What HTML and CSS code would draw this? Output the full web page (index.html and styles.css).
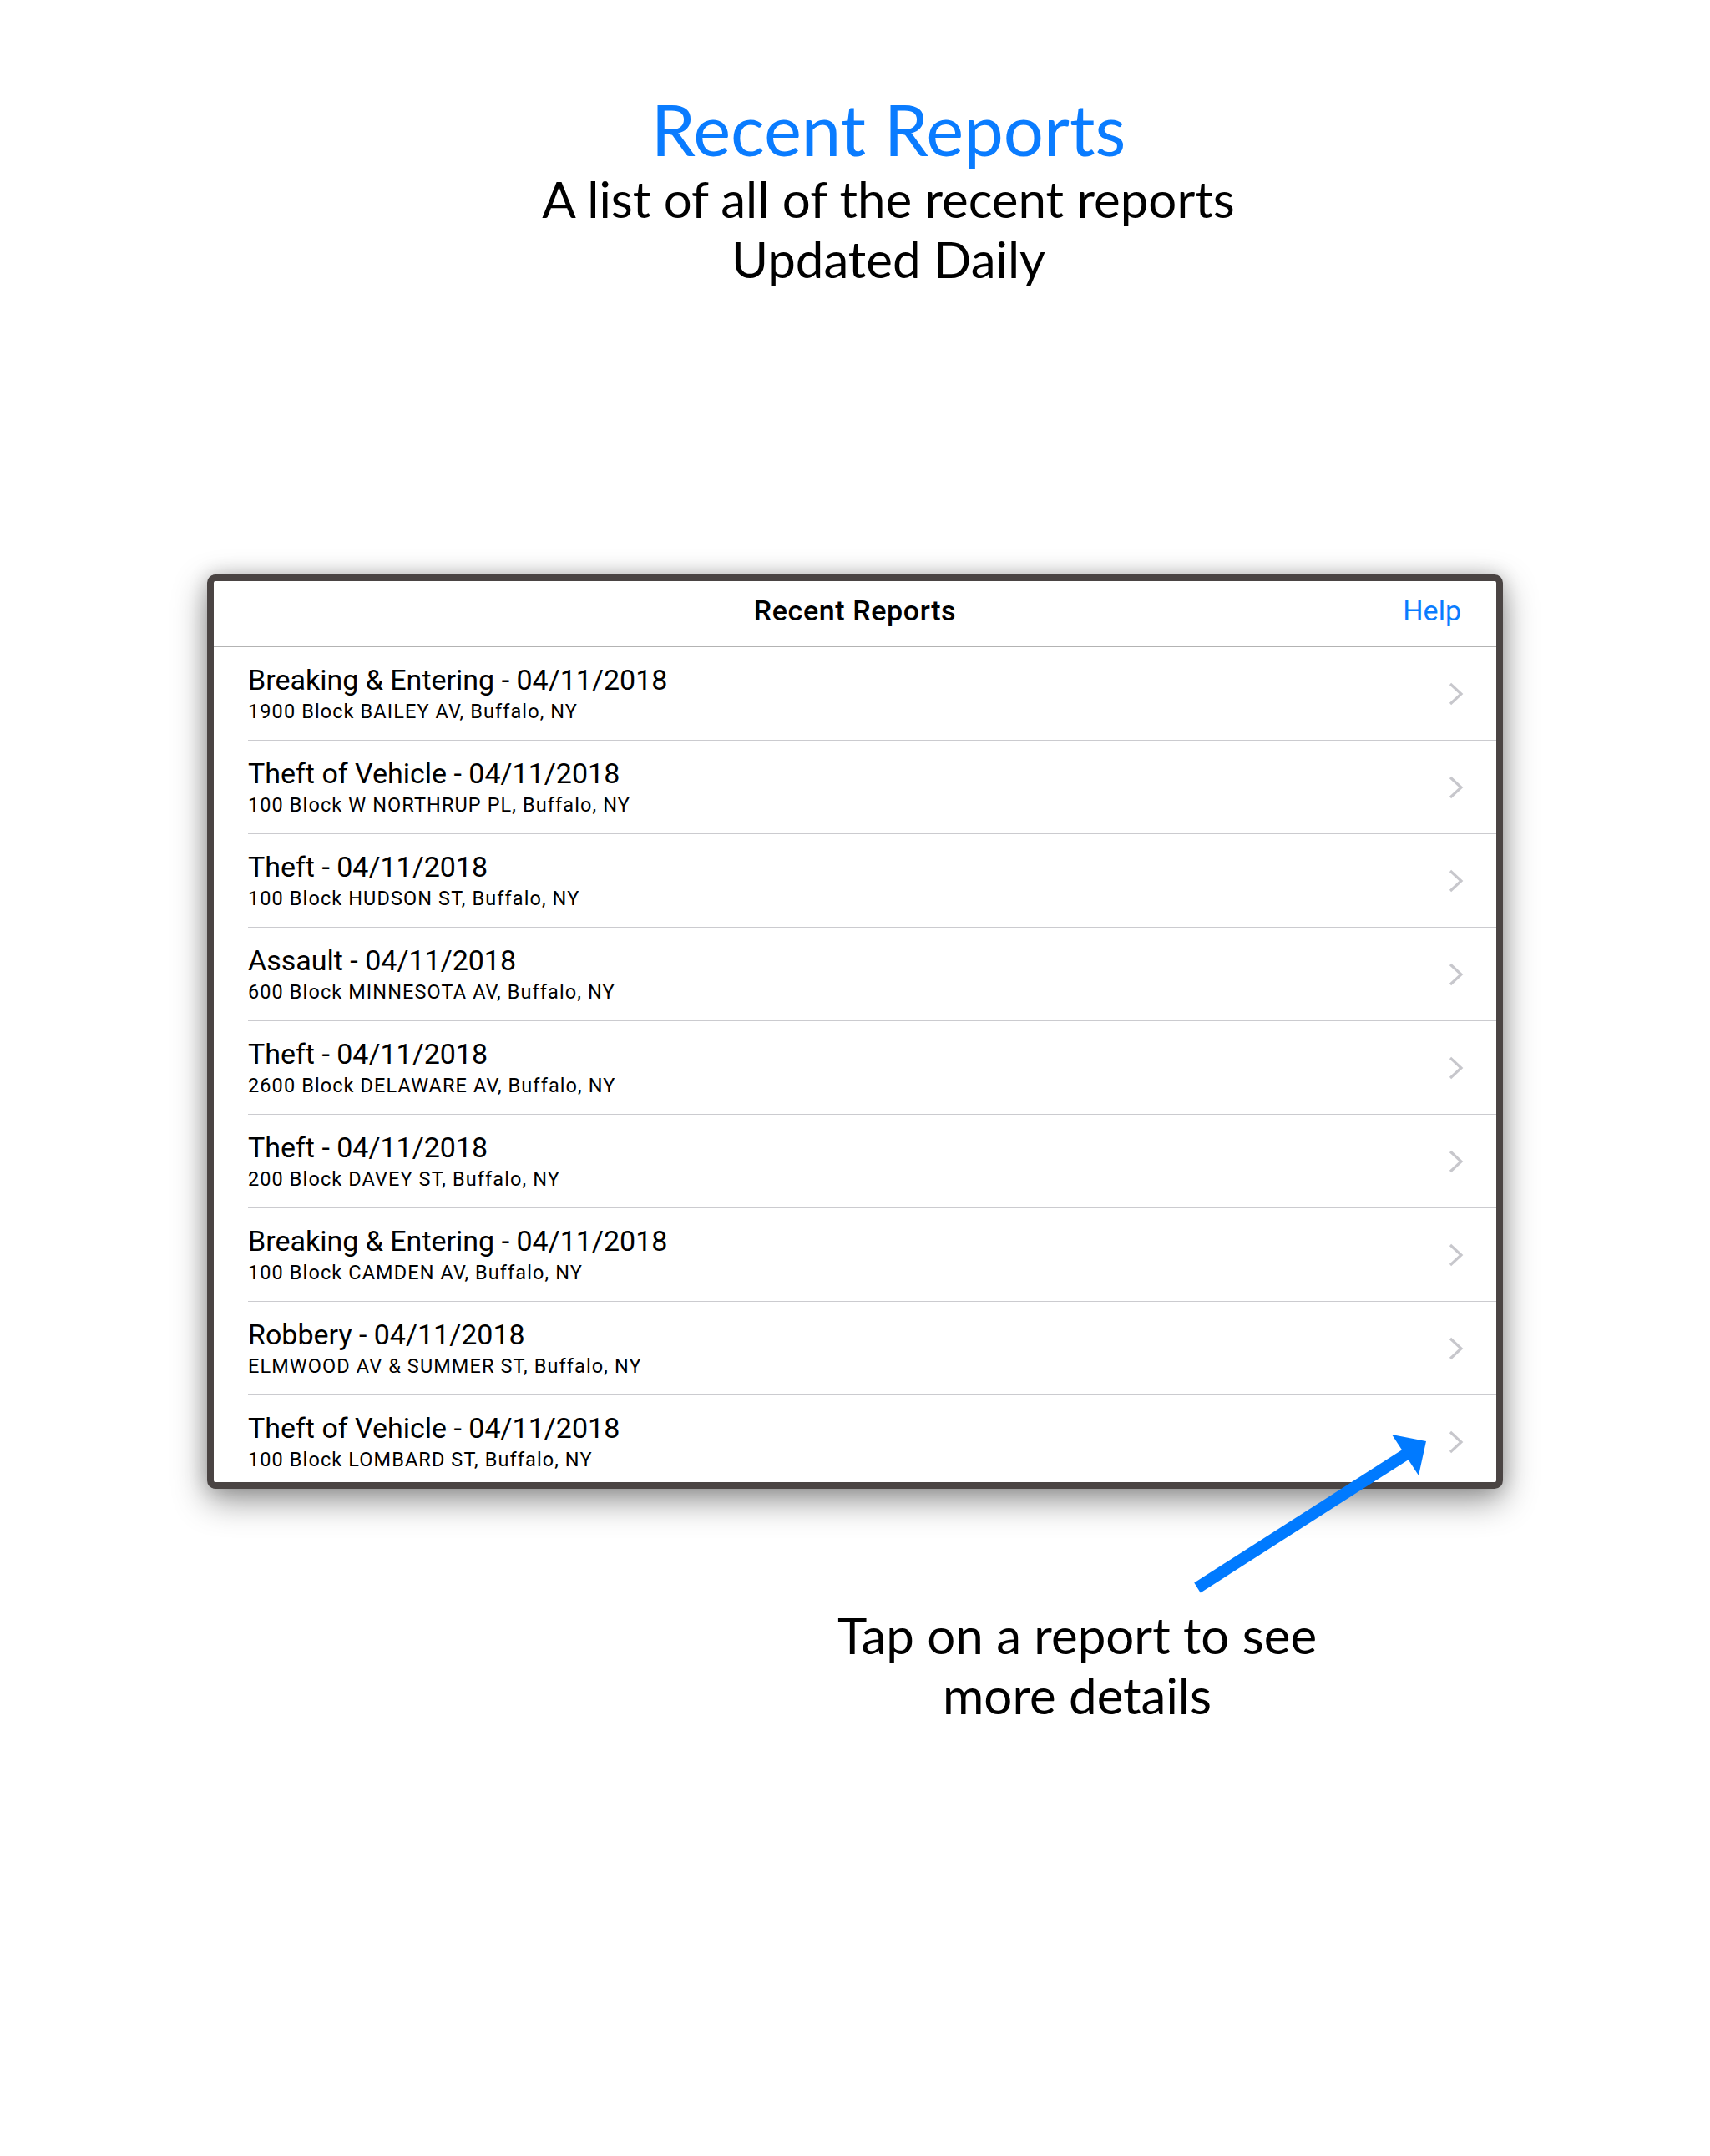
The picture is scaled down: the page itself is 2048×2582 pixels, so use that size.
FILE: index.html
```html
<!DOCTYPE html>
<html lang="en">
<head>
<meta charset="utf-8">
<title>Recent Reports</title>
<link rel="stylesheet" href="styles.css">
</head>
<body>
<div class="page">
  <header class="intro">
    <h1 class="intro-title">Recent Reports</h1>
    <p class="intro-sub">A list of all of the recent reports<br>Updated Daily</p>
  </header>

  <div class="device">
    <div class="navbar">
      <span class="nav-spacer"></span>
      <span class="nav-title">Recent Reports</span>
      <span class="nav-help">Help</span>
    </div>
    <ul class="list">
      <li class="row"><div class="row-text"><span class="row-title">Breaking &amp; Entering - 04/11/2018</span><span class="row-sub">1900 Block BAILEY AV, Buffalo, NY</span></div><svg class="chev" viewBox="0 0 18 28"><path d="M2 2 L15 14 L2 26"/></svg></li>
      <li class="row"><div class="row-text"><span class="row-title">Theft of Vehicle - 04/11/2018</span><span class="row-sub">100 Block W NORTHRUP PL, Buffalo, NY</span></div><svg class="chev" viewBox="0 0 18 28"><path d="M2 2 L15 14 L2 26"/></svg></li>
      <li class="row"><div class="row-text"><span class="row-title">Theft - 04/11/2018</span><span class="row-sub">100 Block HUDSON ST, Buffalo, NY</span></div><svg class="chev" viewBox="0 0 18 28"><path d="M2 2 L15 14 L2 26"/></svg></li>
      <li class="row"><div class="row-text"><span class="row-title">Assault - 04/11/2018</span><span class="row-sub">600 Block MINNESOTA AV, Buffalo, NY</span></div><svg class="chev" viewBox="0 0 18 28"><path d="M2 2 L15 14 L2 26"/></svg></li>
      <li class="row"><div class="row-text"><span class="row-title">Theft - 04/11/2018</span><span class="row-sub">2600 Block DELAWARE AV, Buffalo, NY</span></div><svg class="chev" viewBox="0 0 18 28"><path d="M2 2 L15 14 L2 26"/></svg></li>
      <li class="row"><div class="row-text"><span class="row-title">Theft - 04/11/2018</span><span class="row-sub">200 Block DAVEY ST, Buffalo, NY</span></div><svg class="chev" viewBox="0 0 18 28"><path d="M2 2 L15 14 L2 26"/></svg></li>
      <li class="row"><div class="row-text"><span class="row-title">Breaking &amp; Entering - 04/11/2018</span><span class="row-sub">100 Block CAMDEN AV, Buffalo, NY</span></div><svg class="chev" viewBox="0 0 18 28"><path d="M2 2 L15 14 L2 26"/></svg></li>
      <li class="row"><div class="row-text"><span class="row-title">Robbery - 04/11/2018</span><span class="row-sub">ELMWOOD AV &amp; SUMMER ST, Buffalo, NY</span></div><svg class="chev" viewBox="0 0 18 28"><path d="M2 2 L15 14 L2 26"/></svg></li>
      <li class="row"><div class="row-text"><span class="row-title">Theft of Vehicle - 04/11/2018</span><span class="row-sub">100 Block LOMBARD ST, Buffalo, NY</span></div><svg class="chev" viewBox="0 0 18 28"><path d="M2 2 L15 14 L2 26"/></svg></li>
    </ul>
  </div>

  <p class="caption">Tap on a report to see<br>more details</p>

  <svg class="arrow" viewBox="0 0 340 240" width="340" height="240">
    <line x1="34" y1="201.5" x2="288" y2="39" class="arrow-shaft"/>
    <polygon points="308,26 267,18 299,67" class="arrow-head"/>
  </svg>
</div>
</body>
</html>
```

FILE: styles.css
```css
html, body {
  margin: 0;
  padding: 0;
  background: #ffffff;
}

.page {
  position: relative;
  width: 2048px;
  height: 2582px;
  font-family: Lato, "Open Sans", sans-serif;
  color: #000000;
}

.intro {
  padding-top: 106px;
  padding-left: 80px;
  text-align: center;
}

.intro-title {
  margin: 0;
  font-weight: 400;
  font-size: 85px;
  line-height: 96px;
  color: #0a7cff;
}

.intro-sub {
  margin: 0;
  font-size: 60px;
  line-height: 72px;
  color: #000000;
}

.device {
  box-sizing: content-box;
  width: 1536px;
  height: 1079px;
  margin: 342px auto 0;
  border: 8px solid #4a4443;
  border-radius: 10px;
  background: #ffffff;
  overflow: hidden;
  box-shadow: 0 14px 40px rgba(0, 0, 0, 0.42), 0 0 22px rgba(0, 0, 0, 0.18);
  font-family: Roboto, "Liberation Sans", sans-serif;
}

.navbar {
  display: grid;
  grid-template-columns: 1fr auto 1fr;
  align-items: center;
  box-sizing: border-box;
  height: 79px;
  padding-bottom: 9px;
  border-bottom: 1px solid #b3b3b3;
  padding-right: 42px;
}

.nav-title {
  font-size: 34px;
  font-weight: 500;
  letter-spacing: 0.6px;
  color: #000000;
  padding-left: 42px;
}

.nav-help {
  justify-self: end;
  font-size: 34px;
  color: #0a7cff;
}

.list {
  list-style: none;
  margin: 0;
  padding: 0;
}

.row {
  display: flex;
  align-items: center;
  justify-content: space-between;
  height: 111px;
  margin-left: 41px;
  padding-right: 39px;
  border-bottom: 1px solid #cbcbcf;
}

.row-text {
  display: flex;
  flex-direction: column;
  align-self: flex-start;
  padding-top: 19px;
}

.row-title {
  font-size: 34px;
  line-height: 40px;
  color: #000000;
}

.row-sub {
  margin-top: 4px;
  font-size: 23.5px;
  line-height: 28px;
  letter-spacing: 1.1px;
  color: #000000;
}

.chev {
  width: 18px;
  height: 28px;
  fill: none;
  stroke: #c7c7cc;
  stroke-width: 3.2;
}

.caption {
  width: 700px;
  margin: 139px 0 0 940px;
  text-align: center;
  font-size: 60px;
  line-height: 72px;
}

.arrow {
  position: absolute;
  left: 1400px;
  top: 1700px;
}

.arrow-shaft {
  stroke: #007aff;
  stroke-width: 14;
  stroke-linecap: butt;
}

.arrow-head {
  fill: #007aff;
}
```
